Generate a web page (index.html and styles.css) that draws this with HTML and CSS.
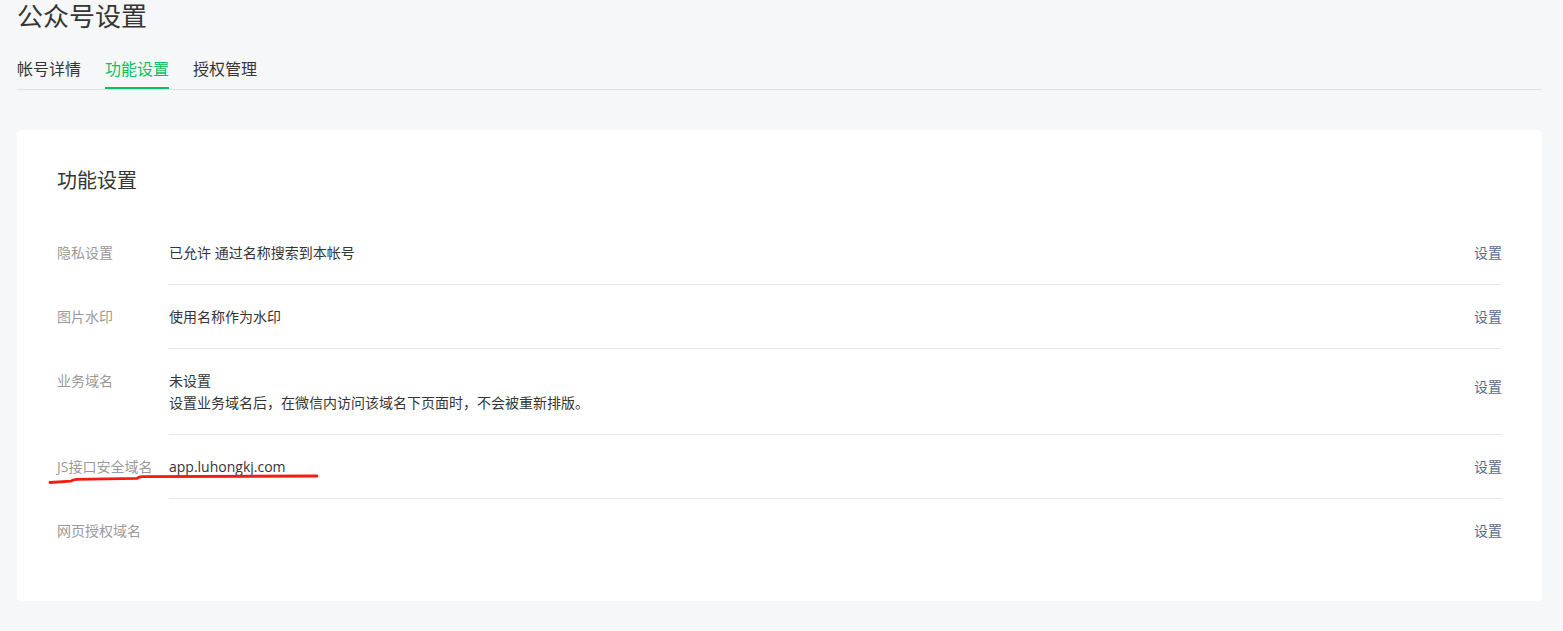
FILE: index.html
```html
<!DOCTYPE html>
<html lang="zh-CN">
<head>
  <meta charset="UTF-8">
  <title>公众号设置</title>
  <link rel="stylesheet" href="styles.css">
</head>
<body>

<div class="page">
  <h2 class="page-title">公众号设置</h2>

  <!-- Tabs -->
  <ul class="tabs">
    <li class="tab">帐号详情</li>
    <li class="tab tab-active">功能设置</li>
    <li class="tab">授权管理</li>
  </ul>

  <div class="card">
    <h3 class="card-title">功能设置</h3>

    <div class="setting-row">
      <div class="setting-label">隐私设置</div>
      <div class="setting-main">
        <div class="setting-value">已允许 通过名称搜索到本帐号</div>
        <a class="setting-link">设置</a>
      </div>
    </div>

    <div class="setting-row">
      <div class="setting-label">图片水印</div>
      <div class="setting-main">
        <div class="setting-value">使用名称作为水印</div>
        <a class="setting-link">设置</a>
      </div>
    </div>

    <div class="setting-row">
      <div class="setting-label">业务域名</div>
      <div class="setting-main">
        <div class="setting-value">
          未设置<br>
          设置业务域名后，在微信内访问该域名下页面时，不会被重新排版。
        </div>
        <a class="setting-link setting-link-up">设置</a>
      </div>
    </div>

    <div class="setting-row">
      <div class="setting-label">JS接口安全域名</div>
      <div class="setting-main">
        <div class="setting-value">app.luhongkj.com</div>
        <a class="setting-link">设置</a>
      </div>
    </div>

    <div class="setting-row setting-row-last">
      <div class="setting-label">网页授权域名</div>
      <div class="setting-main">
        <div class="setting-value"></div>
        <a class="setting-link">设置</a>
      </div>
    </div>
  </div>

  <!-- hand drawn mark -->
  <svg class="mark" width="1563" height="631" viewBox="0 0 1563 631">
    <path d="M50 482.5 L71 481.2 Q73 479.6 76 479.3 L137 478.4 Q139 476.9 142 476.7 L317 476" fill="none" stroke="#f51b0f" stroke-width="2.8" stroke-linecap="round" stroke-linejoin="round"/>
  </svg>
</div>

</body>
</html>
```

FILE: styles.css
```css
html, body {
  margin: 0;
  padding: 0;
}
body {
  background: #f6f7f9;
  font-family: "Open Sans", "Noto Sans CJK SC", sans-serif;
  color: #353535;
}
.page {
  position: relative;
  width: 1525px;
  padding-left: 17px;
  height: 631px;
  overflow: hidden;
}
.page-title {
  margin: 0;
  padding-top: 1px;
  font-size: 26px;
  line-height: 30px;
  font-weight: normal;
  color: #353535;
}
.tabs {
  list-style: none;
  margin: 27px 0 0;
  padding: 0;
  display: flex;
  gap: 24px;
  border-bottom: 1px solid #e0e1e3;
}
.tab {
  font-size: 16px;
  line-height: 22px;
  padding-bottom: 7px;
  border-bottom: 2px solid transparent;
  color: #353535;
  cursor: pointer;
}
.tab-active {
  color: #07c160;
  border-bottom-color: #07c160;
}
.card {
  margin-top: 40px;
  background: #fff;
  border-radius: 4px;
  padding: 37px 40px 39px;
}
.card-title {
  margin: 0 0 26px;
  font-size: 20px;
  line-height: 28px;
  font-weight: normal;
  color: #353535;
}
.setting-row {
  display: flex;
  font-size: 14px;
  line-height: 22px;
}
.setting-label {
  width: 112px;
  flex-shrink: 0;
  padding: 21px 0 20px;
  color: #9a9a9a;
}
.setting-main {
  flex: 1;
  display: flex;
  align-items: center;
  justify-content: space-between;
  padding: 21px 0 20px;
  border-bottom: 1px solid #e7e7e7;
}
.setting-row-last .setting-main {
  border-bottom: none;
}
.setting-value {
  color: #353535;
}
.setting-link {
  color: #576b95;
  cursor: pointer;
}
.setting-link-up {
  margin-bottom: 10px;
}
.mark {
  position: absolute;
  left: 0;
  top: 0;
  pointer-events: none;
}
```
